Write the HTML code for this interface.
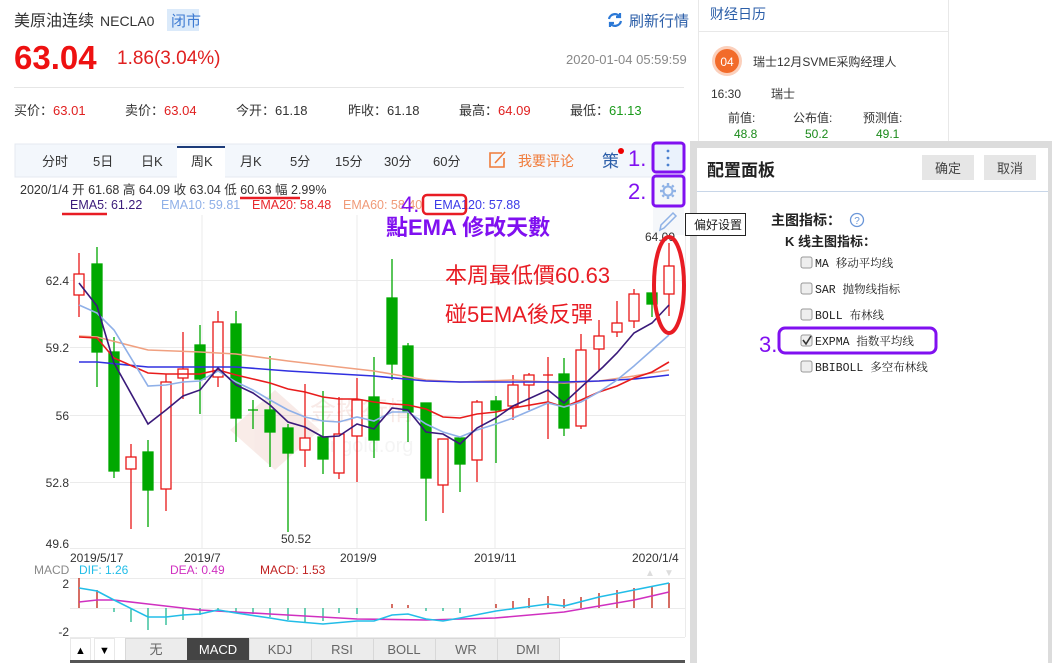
<!DOCTYPE html>
<html><head><meta charset="utf-8">
<style>
html,body{margin:0;padding:0;background:#fff;width:1052px;height:663px;overflow:hidden}
svg{display:block;font-family:"Liberation Sans","Noto Sans CJK SC",sans-serif}
</style></head><body>
<svg width="1052" height="663" viewBox="0 0 1052 663" xmlns="http://www.w3.org/2000/svg">
<!-- header -->
<text x="14" y="26" font-size="16" fill="#333">美原油连续</text>
<text x="100" y="26" font-size="14" fill="#333">NECLA0</text>
<rect x="167" y="9" width="32" height="22" fill="#dbeafa"/>
<text x="171" y="26" font-size="15" fill="#3e7bd2">闭市</text>
<g transform="translate(615,20)" fill="none" stroke="#2b78d6" stroke-width="2.2"><path d="M-6 -1 A6 6 0 0 1 5 -3"/><path d="M6 1 A6 6 0 0 1 -5 3"/><path d="M5 -7 L5 -3 L1 -3" /><path d="M-5 7 L-5 3 L-1 3"/></g>
<text x="629" y="26" font-size="15" fill="#2b5ea8">刷新行情</text>
<text x="14" y="69" font-size="33" font-weight="bold" fill="#ee1111">63.04</text>
<text x="117" y="64" font-size="19" fill="#e02020">1.86(3.04%)</text>
<text x="566" y="64" font-size="13" fill="#888">2020-01-04 05:59:59</text>
<line x1="14" y1="87.5" x2="684" y2="87.5" stroke="#e6e6e6"/>
<g font-size="13" fill="#333">
<text x="14" y="115">买价：<tspan fill="#e02020">63.01</tspan></text>
<text x="125" y="115">卖价：<tspan fill="#e02020">63.04</tspan></text>
<text x="236" y="115">今开：61.18</text>
<text x="348" y="115">昨收：61.18</text>
<text x="459" y="115">最高：<tspan fill="#e02020">64.09</tspan></text>
<text x="570" y="115">最低：<tspan fill="#1a9a1a">61.13</tspan></text>
</g>
<!-- tab bar -->
<rect x="15" y="144" width="670" height="33" fill="#f3f7fc" stroke="#e4e9f0"/>
<rect x="177" y="147" width="48" height="31" fill="#fff"/>
<line x1="177" y1="147" x2="225" y2="147" stroke="#1d3c7a" stroke-width="2"/>
<g font-size="13" fill="#333">
<text x="42" y="166">分时</text><text x="93" y="166">5日</text><text x="141" y="166">日K</text><text x="191" y="166">周K</text><text x="240" y="166">月K</text><text x="290" y="166">5分</text><text x="335" y="166">15分</text><text x="384" y="166">30分</text><text x="433" y="166">60分</text>
</g>
<g fill="none" stroke="#f07b3a" stroke-width="1.6"><path d="M502 153 L490 153 L490 167 L504 167 L504 158"/><path d="M495 163 L505 152"/></g>
<text x="518" y="166" font-size="14" fill="#f07b3a">我要评论</text>
<text x="602" y="167" font-size="17" fill="#2b5ea8">策</text>
<circle cx="621" cy="151" r="3" fill="#e00"/>
<rect x="653" y="144" width="31" height="28" fill="#eaf2fc"/>
<g fill="#4a80d0"><circle cx="668" cy="151" r="1.4"/><circle cx="668" cy="158" r="1.4"/><circle cx="668" cy="165" r="1.4"/></g>
<rect x="653" y="177" width="31" height="29" fill="#f5f7fa"/>
<g transform="translate(668,191)" fill="none" stroke="#8fb2e6" stroke-width="2"><circle r="4.5"/><g stroke-width="2.4"><line y1="-8" y2="-5.5"/><line y1="8" y2="5.5"/><line x1="-8" x2="-5.5"/><line x1="8" x2="5.5"/><line x1="-5.6" y1="-5.6" x2="-4" y2="-4"/><line x1="5.6" y1="5.6" x2="4" y2="4"/><line x1="-5.6" y1="5.6" x2="-4" y2="4"/><line x1="5.6" y1="-5.6" x2="4" y2="-4"/></g></g>
<rect x="653" y="207" width="31" height="28" fill="#f5f7fa"/>
<path d="M660 230 L661 225 L673 213 L676 216 L664 228 Z" fill="none" stroke="#8fb2e6" stroke-width="1.5"/>
<!-- info lines -->
<text x="20" y="194" font-size="12.5" fill="#333">2020/1/4  开 61.68  高 64.09  收 63.04  低 60.63  幅 2.99%</text>
<g font-size="12.5">
<text x="70" y="209" fill="#3a1a7a">EMA5: 61.22</text>
<text x="161" y="209" fill="#8fb0e8">EMA10: 59.81</text>
<text x="252" y="209" fill="#e8282c">EMA20: 58.48</text>
<text x="343" y="209" fill="#f09a78">EMA60: 58.40</text>
<text x="434" y="209" fill="#3b3be8">EMA120: 57.88</text>
</g>
<line x1="62" y1="214" x2="107" y2="214" stroke="#e81c24" stroke-width="2.5"/>
<line x1="240" y1="198" x2="300" y2="198" stroke="#e81c24" stroke-width="2.5"/>
<!-- chart grid -->
<g stroke="#ebebeb" stroke-width="1">
<line x1="70" y1="280.5" x2="685" y2="280.5"/><line x1="70" y1="347.5" x2="685" y2="347.5"/><line x1="70" y1="415.5" x2="685" y2="415.5"/><line x1="70" y1="482.5" x2="685" y2="482.5"/><line x1="70" y1="548.5" x2="685" y2="548.5"/>
<line x1="202" y1="215" x2="202" y2="548"/><line x1="357" y1="215" x2="357" y2="548"/><line x1="495" y1="215" x2="495" y2="548"/>
<line x1="202" y1="578" x2="202" y2="637"/><line x1="357" y1="578" x2="357" y2="637"/><line x1="495" y1="578" x2="495" y2="637"/>
<line x1="70" y1="578.5" x2="685" y2="578.5"/><line x1="70" y1="608.5" x2="685" y2="608.5"/><line x1="70" y1="637.5" x2="685" y2="637.5"/>
<line x1="685.5" y1="215" x2="685.5" y2="637"/>
</g>
<g font-size="12" fill="#333" text-anchor="end">
<text x="69" y="285">62.4</text><text x="69" y="352">59.2</text><text x="69" y="420">56</text><text x="69" y="487">52.8</text><text x="69" y="548">49.6</text>
</g>
<!-- watermark -->
<g opacity="0.1"><path d="M230 430 L275 390 L320 430 L275 470 Z" fill="#c04020"/><text x="258" y="450" font-size="20" fill="#c04020">Au</text><text x="310" y="420" font-size="26" fill="#c04020">金投行情</text><text x="320" y="452" font-size="20" fill="#999">cngold.org</text></g>
<!-- candles -->
<g stroke-width="1.3">
<g stroke="#e81818" fill="#fff">
<line x1="79" y1="253" x2="79" y2="317"/><rect x="74" y="274" width="10" height="21"/>
<line x1="131" y1="444" x2="131" y2="529"/><rect x="126" y="457" width="10" height="12"/>
<line x1="166" y1="374" x2="166" y2="511"/><rect x="161" y="382" width="10" height="107"/>
<line x1="183" y1="332" x2="183" y2="399"/><rect x="178" y="369" width="10" height="9"/>
<line x1="218" y1="311" x2="218" y2="387"/><rect x="213" y="322" width="10" height="55"/>
<line x1="305" y1="384" x2="305" y2="467"/><rect x="300" y="438" width="10" height="12"/>
<line x1="339" y1="397" x2="339" y2="479"/><rect x="334" y="434" width="10" height="39"/>
<line x1="357" y1="378" x2="357" y2="482"/><rect x="352" y="400" width="10" height="36"/>
<line x1="443" y1="439" x2="443" y2="513"/><rect x="438" y="439" width="10" height="46"/>
<line x1="477" y1="400" x2="477" y2="482"/><rect x="472" y="402" width="10" height="58"/>
<line x1="513" y1="375" x2="513" y2="420"/><rect x="508" y="385" width="10" height="21"/>
<line x1="529" y1="373" x2="529" y2="410"/><rect x="524" y="375" width="10" height="10"/>
<line x1="548" y1="357" x2="548" y2="439"/><line x1="543" y1="375" x2="553" y2="375"/>
<line x1="581" y1="334" x2="581" y2="429"/><rect x="576" y="350" width="10" height="76"/>
<line x1="599" y1="320" x2="599" y2="370"/><rect x="594" y="336" width="10" height="13"/>
<line x1="617" y1="301" x2="617" y2="337"/><rect x="612" y="323" width="10" height="9"/>
<line x1="634" y1="289" x2="634" y2="328"/><rect x="629" y="294" width="10" height="27"/>
<line x1="669" y1="243" x2="669" y2="316"/><rect x="664" y="266" width="10" height="28"/>
</g>
<g stroke="#00a800" fill="#00a800">
<line x1="97" y1="247" x2="97" y2="387"/><rect x="92" y="264" width="10" height="88"/>
<line x1="114" y1="337" x2="114" y2="478"/><rect x="109" y="352" width="10" height="119"/>
<line x1="148" y1="440" x2="148" y2="527"/><rect x="143" y="452" width="10" height="38"/>
<line x1="200" y1="325" x2="200" y2="414"/><rect x="195" y="345" width="10" height="34"/>
<line x1="236" y1="311" x2="236" y2="442"/><rect x="231" y="324" width="10" height="94"/>
<line x1="253" y1="400" x2="253" y2="429"/><line x1="248" y1="410" x2="258" y2="410"/>
<line x1="270" y1="356" x2="270" y2="467"/><rect x="265" y="410" width="10" height="22"/>
<line x1="288" y1="424" x2="288" y2="532"/><rect x="283" y="428" width="10" height="25"/>
<line x1="323" y1="391" x2="323" y2="474"/><rect x="318" y="437" width="10" height="22"/>
<line x1="374" y1="357" x2="374" y2="458"/><rect x="369" y="397" width="10" height="43"/>
<line x1="392" y1="259" x2="392" y2="380"/><rect x="387" y="298" width="10" height="66"/>
<line x1="408" y1="343" x2="408" y2="442"/><rect x="403" y="346" width="10" height="66"/>
<line x1="426" y1="403" x2="426" y2="521"/><rect x="421" y="403" width="10" height="75"/>
<line x1="460" y1="438" x2="460" y2="492"/><rect x="455" y="438" width="10" height="26"/>
<line x1="496" y1="396" x2="496" y2="463"/><rect x="491" y="401" width="10" height="9"/>
<line x1="564" y1="358" x2="564" y2="436"/><rect x="559" y="374" width="10" height="54"/>
<line x1="652" y1="293" x2="652" y2="317"/><rect x="647" y="293" width="10" height="11"/>
</g>
</g>
<!-- EMAs -->
<g fill="none" stroke-width="1.6">
<polyline stroke="#f0a080" points="79,336 97,337 148,350 200,352 236,354 288,361 339,367 374,371 426,380 460,382 513,380 564,383 599,381 634,376 669,370"/>
<polyline stroke="#3030e0" points="79,362 97,362 148,367 200,367 236,367 288,371 339,374 374,376 426,381 460,382 513,382 564,382 599,381 634,379 669,375"/>
<polyline stroke="#e81c1c" points="79,337 97,338 114,358 148,373 166,374 183,374 200,374 218,370 236,375 253,379 270,383 288,389 305,392 323,397 339,399 357,399 374,402 392,404 408,405 426,409 443,417 460,418 477,414 496,412 513,408 548,402 564,407 581,400 599,392 617,386 634,378 652,372 669,362"/>
<polyline stroke="#8fb0e8" points="79,305 97,313 114,330 148,386 166,385 183,382 200,381 218,371 236,382 253,390 270,400 288,410 305,417 323,421 339,422 357,417 374,421 392,412 408,412 426,424 443,432 460,437 477,430 496,424 513,418 548,403 564,407 581,402 599,392 617,380 634,366 652,350 669,335"/>
<polyline stroke="#3a1a7a" points="79,283 97,306 114,363 148,424 166,410 183,396 200,390 218,368 236,385 253,393 270,405 288,422 305,427 323,437 339,436 357,424 374,429 392,408 408,410 426,432 443,434 460,444 477,428 496,418 513,406 548,390 564,403 603,367 617,353 634,333 652,323 669,305"/>
</g>
<text x="645" y="241" font-size="12" fill="#333">64.09</text>
<text x="281" y="543" font-size="12" fill="#333">50.52</text>
<g font-size="12" fill="#333">
<text x="70" y="562">2019/5/17</text><text x="184" y="562">2019/7</text><text x="340" y="562">2019/9</text><text x="474" y="562">2019/11</text><text x="632" y="562">2020/1/4</text>
</g>
<!-- MACD -->
<g font-size="12"><text x="34" y="574" fill="#888">MACD</text><text x="79" y="574" fill="#22bde8">DIF: 1.26</text><text x="170" y="574" fill="#d030c0">DEA: 0.49</text><text x="260" y="574" fill="#c02020">MACD: 1.53</text></g>
<text x="645" y="576" font-size="10" fill="#ddd">▲</text><text x="664" y="576" font-size="10" fill="#ddd">▼</text>
<g font-size="12" fill="#333" text-anchor="end"><text x="69" y="588">2</text><text x="69" y="636">-2</text></g>
<g stroke-width="1.3">
<g stroke="#c02010"><line x1="79" y1="578" x2="79" y2="608"/><line x1="97" y1="590" x2="97" y2="608"/><line x1="392" y1="604" x2="392" y2="608"/><line x1="408" y1="605" x2="408" y2="608"/><line x1="496" y1="604" x2="496" y2="608"/><line x1="513" y1="601" x2="513" y2="608"/><line x1="529" y1="598" x2="529" y2="608"/><line x1="548" y1="596" x2="548" y2="608"/><line x1="564" y1="599" x2="564" y2="608"/><line x1="581" y1="597" x2="581" y2="608"/><line x1="599" y1="593" x2="599" y2="608"/><line x1="617" y1="590" x2="617" y2="608"/><line x1="634" y1="588" x2="634" y2="608"/><line x1="652" y1="586" x2="652" y2="608"/><line x1="669" y1="583" x2="669" y2="608"/></g>
<g stroke="#20b890"><line x1="114" y1="608" x2="114" y2="612"/><line x1="131" y1="608" x2="131" y2="622"/><line x1="148" y1="608" x2="148" y2="630"/><line x1="166" y1="608" x2="166" y2="625"/><line x1="183" y1="608" x2="183" y2="620"/><line x1="200" y1="608" x2="200" y2="615"/><line x1="218" y1="608" x2="218" y2="611"/><line x1="236" y1="608" x2="236" y2="612"/><line x1="253" y1="608" x2="253" y2="614"/><line x1="270" y1="608" x2="270" y2="617"/><line x1="288" y1="608" x2="288" y2="620"/><line x1="305" y1="608" x2="305" y2="622"/><line x1="323" y1="608" x2="323" y2="621"/><line x1="339" y1="608" x2="339" y2="613"/><line x1="357" y1="608" x2="357" y2="614"/><line x1="426" y1="608" x2="426" y2="611"/><line x1="443" y1="608" x2="443" y2="611"/><line x1="460" y1="608" x2="460" y2="613"/></g>
</g>
<g fill="none" stroke-width="1.6">
<polyline stroke="#d030c0" points="79,602 97,600 114,600 148,604 200,610 270,614 357,619 426,620 495,618 564,612 634,600 669,592"/>
<polyline stroke="#22bde8" points="79,588 97,591 114,600 148,617 166,617 183,615 200,614 218,610 236,613 270,618 288,621 323,624 357,621 374,621 392,615 408,614 426,619 443,621 460,618 496,611 548,604 564,606 599,597 634,590 669,583"/>
</g>
<!-- bottom buttons -->
<rect x="70.5" y="638.5" width="20" height="22" fill="#fff" stroke="#e8e8e8"/><text x="75" y="654" font-size="11">▲</text>
<rect x="94.5" y="638.5" width="20" height="22" fill="#fff" stroke="#e8e8e8"/><text x="99" y="654" font-size="11">▼</text>
<g stroke="#d8d8d8" fill="#ececec">
<rect x="125.5" y="638.5" width="62" height="22"/><rect x="187.5" y="638.5" width="62" height="22" fill="#444" stroke="#444"/><rect x="249.5" y="638.5" width="62" height="22"/><rect x="311.5" y="638.5" width="62" height="22"/><rect x="373.5" y="638.5" width="62" height="22"/><rect x="435.5" y="638.5" width="62" height="22"/><rect x="497.5" y="638.5" width="62" height="22"/>
</g>
<g font-size="13" fill="#666" text-anchor="middle"><text x="156" y="654">无</text><text x="218" y="654" fill="#fff">MACD</text><text x="280" y="654">KDJ</text><text x="342" y="654">RSI</text><text x="404" y="654">BOLL</text><text x="466" y="654">WR</text><text x="528" y="654">DMI</text></g>
<rect x="70" y="660" width="615" height="3" fill="#555"/>
<!-- annotations -->
<rect x="653" y="143" width="31" height="29" rx="3" fill="none" stroke="#8010f0" stroke-width="3"/>
<rect x="653" y="176" width="31" height="30" rx="3" fill="none" stroke="#8010f0" stroke-width="3"/>
<text x="628" y="166" font-size="22" fill="#8010f0">1.</text>
<text x="628" y="199" font-size="22" fill="#8010f0">2.</text>
<text x="401" y="212" font-size="22" fill="#8010f0">4.</text>
<rect x="423" y="195" width="43" height="19" rx="4" fill="none" stroke="#e81c24" stroke-width="2.5"/>
<text x="386" y="235" font-size="22" font-weight="bold" fill="#8010f0">點EMA 修改天數</text>
<text x="445" y="283" font-size="22" fill="#e81c24">本周最低價60.63</text>
<text x="445" y="322" font-size="22" fill="#e81c24">碰5EMA後反彈</text>
<ellipse cx="669" cy="285" rx="15" ry="48" fill="none" stroke="#e81c24" stroke-width="4"/>
<!-- calendar -->
<line x1="698.5" y1="0" x2="698.5" y2="143" stroke="#e8e8e8"/>
<line x1="948.5" y1="0" x2="948.5" y2="143" stroke="#e8e8e8"/>
<text x="710" y="19" font-size="14" fill="#2b5ea8">财经日历</text>
<line x1="699" y1="31.5" x2="948" y2="31.5" stroke="#e8e8e8"/>
<circle cx="727" cy="61" r="15" fill="#fbd0bc"/><circle cx="727" cy="61" r="12" fill="#f26b2a"/>
<text x="727" y="66" font-size="12" fill="#fff" text-anchor="middle">04</text>
<text x="753" y="66" font-size="12" fill="#333">瑞士12月SVME采购经理人</text>
<text x="711" y="98" font-size="12" fill="#333">16:30</text><text x="771" y="98" font-size="12" fill="#333">瑞士</text>
<g font-size="12" fill="#333"><text x="728" y="122">前值:</text><text x="793" y="122">公布值:</text><text x="863" y="122">预测值:</text></g>
<g font-size="12" fill="#1a8a1a"><text x="734" y="138">48.8</text><text x="805" y="138">50.2</text><text x="876" y="138">49.1</text></g>
<!-- config panel -->
<rect x="690" y="141" width="362" height="522" fill="#dcdcdc"/>
<rect x="697" y="148" width="351" height="515" fill="#fff"/>
<text x="707" y="176" font-size="17" fill="#222" font-weight="bold">配置面板</text>
<rect x="922" y="155" width="52" height="25" fill="#e6e6e6"/><text x="948" y="173" font-size="13" fill="#444" text-anchor="middle">确定</text>
<rect x="984" y="155" width="52" height="25" fill="#e6e6e6"/><text x="1010" y="173" font-size="13" fill="#444" text-anchor="middle">取消</text>
<line x1="697" y1="191.5" x2="1048" y2="191.5" stroke="#c8d6e8"/>
<text x="771" y="225" font-size="14" font-weight="bold" fill="#222">主图指标：</text>
<circle cx="857" cy="220" r="6.5" fill="none" stroke="#6a96d8" stroke-width="1.3"/><text x="857" y="224" font-size="10" fill="#6a96d8" text-anchor="middle">?</text>
<text x="785" y="246" font-size="13" font-weight="bold" fill="#222">K  线主图指标：</text>
<g font-size="11.5" fill="#222" font-family="Liberation Mono,Noto Serif CJK SC,serif">
<rect x="801" y="257" width="11" height="11" rx="2" fill="#eee" stroke="#999"/><text x="815" y="267">MA 移动平均线</text>
<rect x="801" y="283" width="11" height="11" rx="2" fill="#eee" stroke="#999"/><text x="815" y="293">SAR 抛物线指标</text>
<rect x="801" y="309" width="11" height="11" rx="2" fill="#eee" stroke="#999"/><text x="815" y="319">BOLL 布林线</text>
<rect x="801" y="335" width="11" height="11" rx="2" fill="#eee" stroke="#999"/><path d="M803 340 L806 344 L811 336" fill="none" stroke="#333" stroke-width="1.6"/><text x="815" y="345">EXPMA 指数平均线</text>
<rect x="801" y="361" width="11" height="11" rx="2" fill="#eee" stroke="#999"/><text x="815" y="371">BBIBOLL 多空布林线</text>
</g>
<rect x="779" y="328" width="157" height="25" rx="6" fill="none" stroke="#8010f0" stroke-width="3"/>
<text x="759" y="352" font-size="22" fill="#8010f0">3.</text>
<!-- tooltip on top -->
<rect x="685.5" y="213.5" width="60" height="22" fill="#fff" stroke="#222"/>
<text x="694" y="229" font-size="12" fill="#222">偏好设置</text>
</svg>
</body></html>
